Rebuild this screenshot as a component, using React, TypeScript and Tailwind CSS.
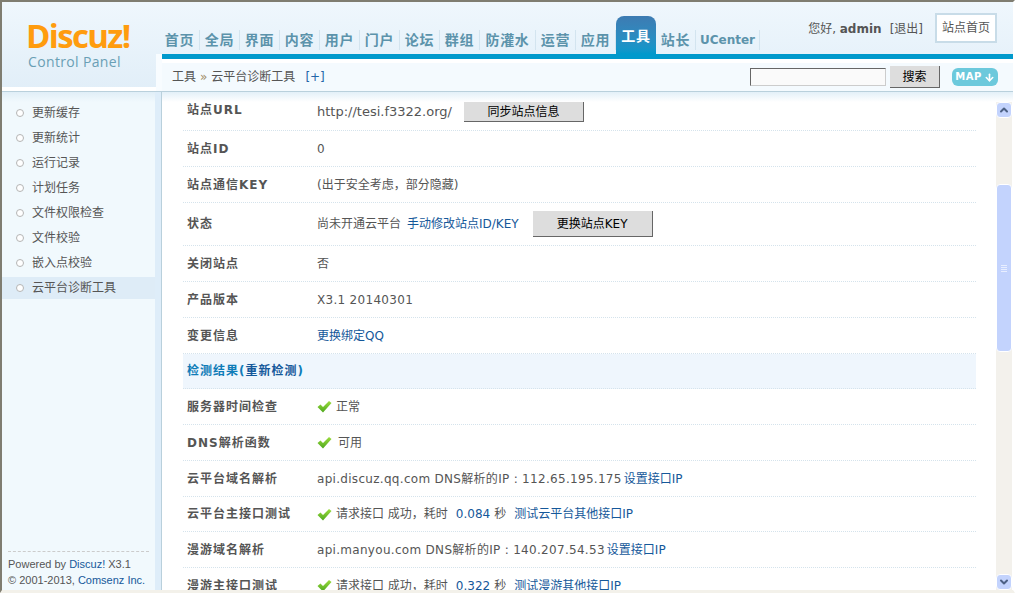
import { ArrowDown, ChevronDown, ChevronUp } from "lucide-react";
import type { ReactNode } from "react";

const tabs = [
  { name: "首页", w: "w-10" },
  { name: "全局", w: "w-10" },
  { name: "界面", w: "w-10" },
  { name: "内容", w: "w-10" },
  { name: "用户", w: "w-10" },
  { name: "门户", w: "w-10" },
  { name: "论坛", w: "w-10" },
  { name: "群组", w: "w-10" },
  { name: "防灌水", w: "w-14" },
  { name: "运营", w: "w-10" },
  { name: "应用", w: "w-10" },
  { name: "工具", w: "w-10", active: true },
  { name: "站长", w: "w-10" },
  { name: "UCenter", w: "w-16" },
];

const sideItems = ["更新缓存", "更新统计", "运行记录", "计划任务", "文件权限检查", "文件校验", "嵌入点校验", "云平台诊断工具"];

const Check = () => (
  <svg width="15" height="13" viewBox="0 0 15 13" className="shrink-0">
    <defs>
      <linearGradient id="ok" x1="0" y1="0" x2="0" y2="1">
        <stop offset="0" stopColor="#9bdc3c" />
        <stop offset="1" stopColor="#4ea81e" />
      </linearGradient>
    </defs>
    <path d="M0.5 7 L3.5 4.5 L6 7 L12 1 L14.5 3 L6 12.5 Z" fill="url(#ok)" />
  </svg>
);

const Link = ({ children }: { children: ReactNode }) => <span className="text-[#15589a]">{children}</span>;

const Btn = ({ children, className }: { children: ReactNode; className: string }) => (
  <div className={`flex items-center justify-center bg-[#dddddd] border-r border-b border-[#666666] text-black text-xs ${className}`}>
    {children}
  </div>
);

const Row = ({ label, children, className = "h-9 items-center" }: { label: string; children: ReactNode; className?: string }) => (
  <div className={`flex shrink-0 pl-1 border-b border-dotted border-[#d5e3ec] ${className}`}>
    <div className="w-32.5 shrink-0 font-bold tracking-[1px] text-[#555555]">{label}</div>
    <div className="flex items-center text-[#555555]">{children}</div>
  </div>
);

export default function App() {
  return (
    <div className="h-screen flex flex-col overflow-hidden bg-white border-l-2 border-t-2 border-r-2 border-b-3 border-l-[#7f7d71] border-t-[#7f7d71] border-r-white border-b-[#f3f1ea] text-xs font-['DejaVu_Sans','Noto_Sans_CJK_SC',sans-serif]">
      <header className="h-[90px] shrink-0 flex border-b border-[#b9d0dc] bg-gradient-to-b from-[#eff7fd] to-[#e1eef8]">
        <div className="w-40 shrink-0 flex">
          <div className="flex-1 flex flex-col">
            <div className="flex-1 flex flex-col pt-4.5 pl-6">
              <div className="text-[33px] leading-8 font-bold tracking-tighter text-[#ff9c0e] font-['Open_Sans','Liberation_Sans',sans-serif]">
                Discuz!
              </div>
              <div className="pl-0.5 text-sm leading-5 tracking-wide text-[#6a9fb5] font-['Open_Sans','Liberation_Sans',sans-serif]">
                Control Panel
              </div>
            </div>
            <div className="h-1 bg-white" />
          </div>
          <div className="w-1.5 flex flex-col">
            <div className="h-13" />
            <div className="flex-1 bg-[#f8fcff]" />
          </div>
        </div>
        <div className="flex-1 flex flex-col min-w-0">
          <div className="h-13 flex justify-between items-start">
            <nav className="h-full -ml-0.5 flex items-end">
              {tabs.map((t) =>
                t.active ? (
                  <div
                    key={t.name}
                    className={`${t.w} h-9.5 pb-1 rounded-t-lg flex items-end justify-center text-sm font-bold tracking-wider text-white bg-gradient-to-b from-[#3d7bb2] to-[#0099cc]`}
                  >
                    <span className="pb-1">{t.name}</span>
                  </div>
                ) : (
                  <div key={t.name} className={`${t.w} h-7 flex items-center justify-center`}>
                    <span
                      className={`flex-1 text-center font-bold text-[#5c93ab] ${t.name === "UCenter" ? "text-xs" : "text-sm tracking-wider"}`}
                    >
                      {t.name}
                    </span>
                    <span className="h-5 border-r border-[#d3e4ef]" />
                  </div>
                )
              )}
            </nav>
            <div className="flex items-start pr-4 mt-2.75">
              <div className="pt-2 text-[#555555]">
                您好, <b>admin</b>
                <span className="ml-2 text-[#555555]">[退出]</span>
              </div>
              <div className="ml-3 w-15.5 h-7.5 flex items-center justify-center bg-white border-2 border-[#c8dce8] text-[#555555]">
                站点首页
              </div>
            </div>
          </div>
          <div className="h-1.25 bg-[#0099cc]" />
          <div className="h-1 bg-white" />
          <div className="flex-1 flex items-center pl-2.5 pr-3.75 bg-[#f4fafe] text-[#555555]">
            <span>工具</span>
            <span className="mx-1 text-[#a08a66]">»</span>
            <span>云平台诊断工具</span>
            <span className="ml-2.5 text-[#2366a8]">[+]</span>
            <div className="ml-auto h-4.5 w-34 bg-[#fafafa] border border-t-[#666666] border-l-[#666666] border-r-[#cccccc] border-b-[#cccccc]" />
            <Btn className="ml-1 w-12.5 h-5.5">搜索</Btn>
            <div className="ml-3 w-11.5 h-4.5 rounded-md bg-[#6cc9dc] text-white flex items-center justify-center gap-0.5 text-[10px] font-bold tracking-wider">
              MAP
              <ArrowDown size={11} strokeWidth={3.5} />
            </div>
          </div>
        </div>
      </header>

      <div className="flex-1 flex min-h-0">
        <aside className="w-40 shrink-0 flex border-r border-[#b9d0dc]">
          <div className="flex-1 min-w-0 flex flex-col bg-[#f1f9fd]">
            <div className="h-2.5 shrink-0 bg-gradient-to-b from-[#e0eef7] to-[#f1f9fd]" />
            <ul className="flex flex-col gap-0.75 text-[#555555]">
              {sideItems.map((s, i) => (
                <li
                  key={s}
                  className={`h-5.5 flex items-center gap-2 pl-3.5 ${i === sideItems.length - 1 ? "bg-[#deecf7]" : ""}`}
                >
                  <span className="size-1.5 rounded-full border border-[#b5b5b5] bg-white box-content" />
                  {s}
                </li>
              ))}
            </ul>
            <div className="mt-auto mx-1.5 pt-1 pb-0.5 border-t border-dashed border-[#cccccc] whitespace-nowrap font-['Liberation_Sans','Noto_Sans_CJK_SC',sans-serif] text-[11px] text-[#555555] leading-4">
              <div>
                Powered by <Link>Discuz!</Link> X3.1
              </div>
              <div>
                © 2001-2013, <Link>Comsenz Inc.</Link>
              </div>
            </div>
          </div>
          <div className="w-1.5 bg-[#deedf9]" />
        </aside>

        <main className="flex-1 min-w-0 flex flex-col">
          <div className="h-2.5 shrink-0 bg-gradient-to-b from-[#e3f0f8] to-white" />
          <div className="flex-1 min-h-0 flex">
            <div className="flex-1 min-w-0 flex flex-col overflow-hidden pl-5.25 pr-5">
              <Row label="站点URL" className="h-7.25 items-start">
                <span className="text-[13px]">http://tesi.f3322.org/</span>
                <Btn className="ml-3 w-30 h-5">同步站点信息</Btn>
              </Row>
              <Row label="站点ID">0</Row>
              <Row label="站点通信KEY">(出于安全考虑，部分隐藏)</Row>
              <Row label="状态" className="py-2 items-center">
                尚未开通云平台
                <span className="ml-1.5">
                  <Link>手动修改站点ID/KEY</Link>
                </span>
                <Btn className="ml-3.5 w-30 h-6.5">更换站点KEY</Btn>
              </Row>
              <Row label="关闭站点">否</Row>
              <Row label="产品版本">
                <span className="tracking-wide">X3.1 20140301</span>
              </Row>
              <Row label="变更信息">
                <Link>更换绑定QQ</Link>
              </Row>
              <div className="h-8.75 shrink-0 flex items-center pl-1 bg-[#eff6fd] border-b border-dotted border-[#d5e3ec] font-bold tracking-[1px] text-[#0f7cb8]">
                检测结果(<span className="text-[#15589a]">重新检测</span>)
              </div>
              <Row label="服务器时间检查">
                <Check />
                <span className="ml-1">正常</span>
              </Row>
              <Row label="DNS解析函数">
                <Check />
                <span className="ml-1.5">可用</span>
              </Row>
              <Row label="云平台域名解析">
                <span className="tracking-wide">api.discuz.qq.com DNS解析的IP : 112.65.195.175</span>
                <span className="ml-0.5">
                  <Link>设置接口IP</Link>
                </span>
              </Row>
              <Row label="云平台主接口测试" className="h-8.75 items-center">
                <Check />
                <span className="ml-1">请求接口 成功，耗时</span>
                <span className="ml-2 text-[#15589a]">0.084</span>
                <span className="ml-1">秒</span>
                <span className="ml-2">
                  <Link>测试云平台其他接口IP</Link>
                </span>
              </Row>
              <Row label="漫游域名解析">
                <span className="tracking-wide">api.manyou.com DNS解析的IP : 140.207.54.53</span>
                <span className="ml-0.5">
                  <Link>设置接口IP</Link>
                </span>
              </Row>
              <Row label="漫游主接口测试">
                <Check />
                <span className="ml-1">请求接口 成功，耗时</span>
                <span className="ml-2 text-[#15589a]">0.322</span>
                <span className="ml-1">秒</span>
                <span className="ml-2">
                  <Link>测试漫游其他接口IP</Link>
                </span>
              </Row>
            </div>

            <div className="w-4 mr-px shrink-0 flex flex-col bg-[#f3f1ec]">
              <div className="h-4 shrink-0 flex items-center justify-center rounded-sm bg-[#c3d3fd] border border-white text-[#4d6185]">
                <ChevronUp size={12} strokeWidth={4} />
              </div>
              <div className="h-16.5 shrink-0" />
              <div className="h-42 shrink-0 flex flex-col items-center justify-center gap-px rounded-sm bg-[#c3d3fd] border border-white">
                <span className="w-1.5 h-px bg-[#e8eeff]" />
                <span className="w-1.5 h-px bg-[#e8eeff]" />
                <span className="w-1.5 h-px bg-[#e8eeff]" />
                <span className="w-1.5 h-px bg-[#e8eeff]" />
              </div>
              <div className="flex-1" />
              <div className="h-4 shrink-0 flex items-center justify-center rounded-sm bg-[#c3d3fd] border border-white text-[#4d6185]">
                <ChevronDown size={12} strokeWidth={4} />
              </div>
            </div>
          </div>
        </main>
      </div>
    </div>
  );
}
